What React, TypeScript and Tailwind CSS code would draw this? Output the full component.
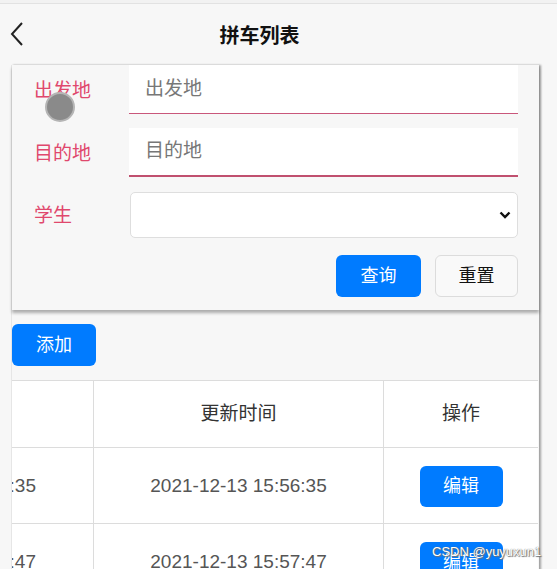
import { ReactNode } from "react"

const font = { fontFamily: '"Liberation Sans", "Noto Sans CJK SC", sans-serif' }

const rows = [
  { time: "2021-12-13 15:56:35" },
  { time: "2021-12-13 15:57:47" },
]

const Label = ({ children }: { children: ReactNode }) => {
  return <div className="w-[95px] shrink-0 pt-[3px] text-[19px] text-[#e0486d]">{children}</div>
}

const BlueButton = ({ children, className }: { children: ReactNode, className?: string }) => {
  return (
    <button className={"flex items-center justify-center rounded-[6px] bg-[#007bff] text-[18px] text-white " + (className ?? "")}>
      {children}
    </button>
  )
}

export default function App() {
  return (
    <div style={font} className="relative h-[569px] w-[557px] overflow-hidden bg-[#f7f7f7]">
      <div className="h-[4px] border-b border-[#e2e2e2] bg-[#f2f2f2]" />
      <div className="relative flex h-[61px] items-center justify-center pr-[38px] pt-[3px]">
        <svg className="absolute left-[9px] top-[17px]" width="16" height="26" viewBox="0 0 16 26">
          <path d="M13 2 L3 13 L13 24" fill="none" stroke="#222" strokeWidth="2" />
        </svg>
        <span className="text-[20px] font-bold text-[#111]">拼车列表</span>
      </div>

      <div className="ml-[11px] h-[520px] w-[528px] border-l border-[#e6e6e6] bg-[#f7f7f7] shadow-[2px_0_2px_rgba(0,0,0,0.35)]">
        <div className="flex flex-col pb-[13px] pl-[22px] pr-[21px] shadow-[0_3px_3px_rgba(0,0,0,0.3)]">
          <div className="flex items-center">
            <Label>出发地</Label>
            <div className="flex h-[49px] flex-1 items-center border-b border-[#c9577b] bg-white pl-[16px] text-[19px] text-[#777]">出发地</div>
          </div>
          <div className="mt-[14px] flex items-center">
            <Label>目的地</Label>
            <div className="flex h-[49px] flex-1 items-center border-b-2 border-[#c0506f] bg-white pl-[16px] text-[19px] text-[#777]">目的地</div>
          </div>
          <div className="mt-[15px] flex items-center">
            <Label>学生</Label>
            <div className="ml-[1px] flex h-[46px] flex-1 items-center justify-end rounded-[5px] border border-[#dedede] bg-white pr-[6px]">
              <svg width="12" height="8" viewBox="0 0 12 8">
                <path d="M1.5 1.5 L6 6 L10.5 1.5" fill="none" stroke="#111" strokeWidth="2.4" />
              </svg>
            </div>
          </div>
          <div className="mt-[17px] flex justify-end gap-[14px]">
            <BlueButton className="h-[42px] w-[85px]">查询</BlueButton>
            <button className="flex h-[42px] w-[83px] items-center justify-center rounded-[6px] border border-[#dcdcdc] bg-[#f9f9f9] text-[18px] text-[#111]">重置</button>
          </div>
        </div>

        <BlueButton className="mt-[14px] h-[42px] w-[84px]">添加</BlueButton>

        <div className="mt-[14px] w-[526px] border-t border-[#dcdcdc] bg-white">
          <div className="flex h-[67px] border-b border-[#dcdcdc] text-[19px] text-[#333]">
            <div className="w-[82px] border-r border-[#dcdcdc]" />
            <div className="flex w-[290px] items-center justify-center border-r border-[#dcdcdc]">更新时间</div>
            <div className="flex flex-1 items-center justify-center">操作</div>
          </div>
          {rows.map((r) => (
            <div key={r.time} className="flex h-[76px] border-b border-[#dcdcdc] text-[19px] text-[#555]">
              <div className="flex w-[82px] items-center justify-end overflow-hidden whitespace-nowrap border-r border-[#dcdcdc] pr-[57px] pt-[2px]">
                {r.time}
              </div>
              <div className="flex w-[290px] items-center justify-center whitespace-nowrap border-r border-[#dcdcdc] pt-[2px]">{r.time}</div>
              <div className="flex flex-1 items-center justify-center pt-[2px]">
                <BlueButton className="h-[41px] w-[83px]">编辑</BlueButton>
              </div>
            </div>
          ))}
        </div>
      </div>

      <div className="absolute left-[45px] top-[92px] h-[30px] w-[30px] rounded-full border-2 border-[#b5b5b5] bg-[#8a8a8a]" />
      <div className="absolute left-[432px] top-[542px] text-[13px] text-white [text-shadow:0_0_1px_#555,1px_1px_1px_#777]">CSDN @yuyuxun1</div>
    </div>
  )
}
